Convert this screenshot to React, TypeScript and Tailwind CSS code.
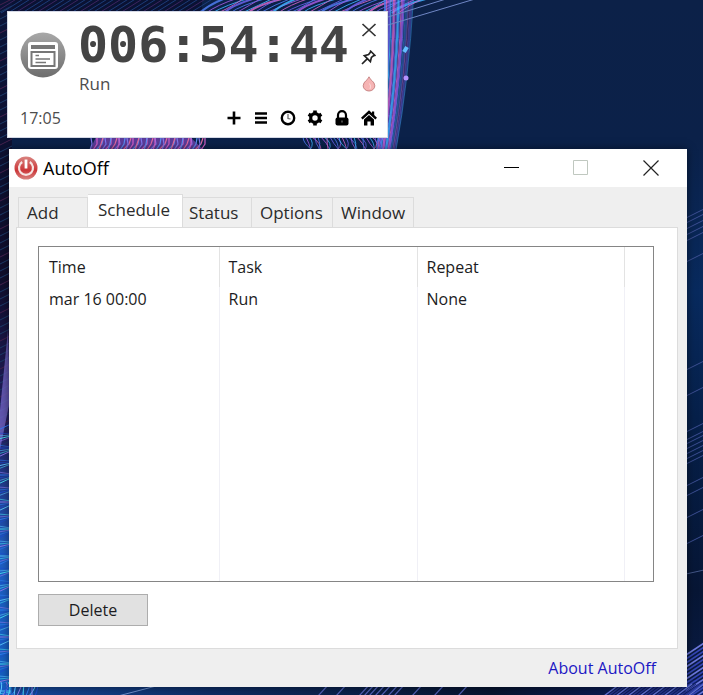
import { useState } from "react";

const tabs = [
  { label: "Add", width: "w-[70px]", inset: "pl-2" },
  { label: "Schedule", width: "w-[95px]", inset: "pl-[10px]" },
  { label: "Status", width: "w-[69px]", inset: "pl-[6px]" },
  { label: "Options", width: "w-[81px]", inset: "pl-2" },
  { label: "Window", width: "w-[81px]", inset: "pl-2" },
];

const tasks = [{ time: "mar 16 00:00", task: "Run", repeat: "None" }];

const range = (n: number) => Array.from({ length: n }, (_, i) => i);

/* ================= DESKTOP WALLPAPER ================= */
const Wallpaper = () => {
  const purples = ["#4f7df0", "#a35be0", "#3fb4ff", "#d267c8", "#6a63ea"];
  const cyans = ["#2f7df5", "#5cc8ff", "#8f7cf0", "#1c4fd0", "#49e0f5"];

  return (
    <svg
      className="absolute inset-0 h-full w-full"
      viewBox="0 0 703 695"
      preserveAspectRatio="none"
      fill="none"
      aria-hidden="true"
    >
      <defs>
        <linearGradient id="sky" x1="0" y1="0" x2="0" y2="1">
          <stop offset="0" stopColor="#0c2148" />
          <stop offset="0.2" stopColor="#0b2149" />
          <stop offset="0.42" stopColor="#082a5e" />
          <stop offset="0.6" stopColor="#06204a" />
          <stop offset="0.85" stopColor="#071635" />
          <stop offset="1" stopColor="#0b1c46" />
        </linearGradient>
        <linearGradient id="floor" x1="0" y1="0" x2="1" y2="0">
          <stop offset="0" stopColor="#164a9c" />
          <stop offset="0.3" stopColor="#0d2c63" />
          <stop offset="0.7" stopColor="#07142f" />
          <stop offset="1" stopColor="#0d1f66" />
        </linearGradient>
        <linearGradient id="edge" x1="0" y1="0" x2="0" y2="1">
          <stop offset="0" stopColor="#0b1438" />
          <stop offset="0.4" stopColor="#100e2c" />
          <stop offset="0.62" stopColor="#232063" />
          <stop offset="0.8" stopColor="#1f5fc4" />
          <stop offset="1" stopColor="#145fc0" />
        </linearGradient>
      </defs>
      <rect width="703" height="695" fill="url(#sky)" />
      <rect y="680" width="703" height="15" fill="url(#floor)" />
      <rect width="12" height="695" fill="url(#edge)" />
      <rect x="12" width="190" height="12" fill="#0a1233" />

      {/* slanted fibres on the upper left */}
      {range(30).map((i) => (
        <path
          key={`t${i}`}
          d={`M${i * 7 - 6} 13l24 -15`}
          stroke={i % 3 ? "#1d3c78" : "#3d2560"}
          strokeWidth="1"
        />
      ))}
      {range(64).map((i) => (
        <path
          key={`l${i}`}
          d={`M-2 ${i * 7 + 6}l14 -7`}
          stroke={i % 4 ? "#1c3b68" : "#44224e"}
          strokeWidth="1"
        />
      ))}
      <path d="M8 330L0 410V450L10 400Z" fill="#7a6cd0" opacity="0.7" />
      {range(90).map((i) => (
        <path
          key={`b${i}`}
          d={`M-2 ${430 + i * 3}l13 ${((i * 7) % 9) - 6}`}
          stroke={cyans[(i * 3) % 5]}
          strokeWidth="1"
          opacity={i % 3 ? 0.6 : 0.9}
        />
      ))}
      {range(14).map((i) => (
        <path
          key={`c${i}`}
          d={`M${i * 3 - 4} 696q${(i % 3) * 4} -9 ${(i % 4) * 2} -14`}
          stroke={cyans[i % 5]}
        />
      ))}

      {/* bundle running behind the timer */}
      {range(34).map((i) => (
        <path
          key={`a${i}`}
          d={`M${200 + i * 6} 13q${8 + (i % 4) * 3} -8 ${26 + (i % 3) * 6} -15`}
          stroke={purples[i % 5]}
          strokeWidth={i % 4 ? 1 : 2}
          opacity="0.85"
        />
      ))}
      {range(20).map((i) => (
        <path
          key={`r${i}`}
          d={`M${385 + i * 1.5} -2Q${386 + i * 1.2} 80 ${377 + i} 150`}
          stroke={purples[(i * 3) % 5]}
          strokeWidth={i % 3 ? 1 : 2}
          opacity={i > 13 ? 0.4 : 0.8}
        />
      ))}
      <path d="M388 17L446 -1M388 25L475 -1" stroke="#6f86c4" strokeWidth="1" />
      <path d="M404 52l3 -5" stroke="#63bdff" strokeWidth="4" />
      <circle cx="406" cy="78" r="2.5" fill="#b493ff" />

      {/* patches in the gap between the windows */}
      <path d="M96 137H190L204 150H90Z" fill="#5b3c9a" />
      {range(38).map((i) => (
        <path
          key={`p${i}`}
          d={`M${90 + i * 3} 150l${(i % 3) * 2 + 2} -6l${(i % 4) - 1} -6`}
          stroke={["#7f78ee", "#d25fc8", "#5b8df0", "#e2689e"][i % 4]}
          strokeWidth="1.2"
        />
      ))}
      {range(27).map((i) => (
        <path
          key={`q${i}`}
          d={`M${303 + i * 3} 137q${(i % 4) * 3} 6 ${9 - (i % 3) * 4} 13`}
          stroke={purples[i % 5]}
          opacity="0.85"
        />
      ))}

      {/* streaks on the right and bottom edges */}
      {[218, 223, 229, 235, 241, 262, 370, 396, 432, 440, 444, 449, 454, 459, 464, 486, 496, 518, 544].map(
        (y) => (
          <path key={y} d={`M686 ${y}l18 -9`} stroke="#3d4f92" strokeWidth="1" />
        ),
      )}
      <path d="M686 574l18 -4" stroke="#435787" />
      {range(13).map((i) => (
        <path
          key={`s${i}`}
          d={`M686 ${655 + i * 4}l18 -12`}
          stroke={i % 3 ? "#3546b4" : "#6c78dc"}
          strokeWidth="1.6"
        />
      ))}
      {range(22).map((i) => (
        <path
          key={`e${i}`}
          d={`M${604 + i * 4} 696l16 -12`}
          stroke={i % 3 ? "#26338c" : "#606fd0"}
          strokeWidth="1.4"
        />
      ))}
      {[318, 336, 359, 364, 369, 375, 381, 388, 394, 412, 434, 458].map((x) => (
        <path key={x} d={`M${x} 696l11 -12`} stroke="#5362b8" strokeWidth="1.2" />
      ))}
      <path d="M118 696L160 685" stroke="#6d8fca" strokeWidth="1" />
    </svg>
  );
};

/* ================= TIMER ICONS ================= */
const CloseIcon = () => (
  <svg width="16" height="16" viewBox="0 0 16 16" stroke="#333" strokeWidth="1.7" fill="none">
    <path d="M1.5 2l13 12M14.5 2L1.5 14" />
  </svg>
);

const PinIcon = () => (
  <svg width="16" height="16" viewBox="0 0 16 16" stroke="#222" strokeWidth="1.7" fill="none">
    <path d="M9 1.5l5.5 5.5M10 2.5L7.6 5.6L3.4 6.6L9.4 12.6L10.4 8.4L13.5 6M6.4 9.6L1 15" />
  </svg>
);

const DropIcon = () => (
  <svg width="16" height="16" viewBox="0 0 16 16">
    <path
      d="M8 .8C8.4 3.6 13.8 5.4 13.8 9.8A5.8 5.2 0 0 1 2.2 9.8C2.2 5.4 7.6 3.6 8 .8Z"
      fill="#f6b4b4"
      stroke="#c98585"
    />
    <path d="M8.5 7.5q2 2.5 .5 5.5" stroke="#fbd9d9" fill="none" />
  </svg>
);

const PlusIcon = () => (
  <svg width="16" height="16" viewBox="0 0 16 16">
    <path d="M8 1.5V14.5M1.5 8H14.5" stroke="#000" strokeWidth="2.6" />
  </svg>
);

const ListIcon = () => (
  <svg width="16" height="16" viewBox="0 0 16 16">
    <path d="M2 3.5H14M2 8H14M2 12.5H14" stroke="#000" strokeWidth="2.6" />
  </svg>
);

const ClockIcon = () => (
  <svg width="16" height="16" viewBox="0 0 16 16" fill="none">
    <circle cx="8" cy="8" r="6.2" stroke="#000" strokeWidth="2.4" />
    <path d="M8 4V8.5L10.5 9" stroke="#666" strokeWidth="1.2" />
  </svg>
);

const GearIcon = () => (
  <svg width="16" height="16" viewBox="0 0 16 16" fill="none" stroke="#000">
    <circle cx="8" cy="8" r="4.3" strokeWidth="3.2" />
    {[0, 60, 120].map((a) => (
      <path
        key={a}
        d="M8 .6V4M8 12V15.4"
        strokeWidth="3.6"
        transform={`rotate(${a} 8 8)`}
      />
    ))}
  </svg>
);

const LockIcon = () => (
  <svg width="16" height="16" viewBox="0 0 16 16" fill="none">
    <path d="M4 8V5.2A3.5 3.5 0 0 1 12 5.2V8" stroke="#000" strokeWidth="2.2" />
    <rect x="1.5" y="7.5" width="13" height="8" rx="2" fill="#000" />
    <path d="M8 10.5V12.5" stroke="#777" strokeWidth="1.2" />
  </svg>
);

const HomeIcon = () => (
  <svg width="16" height="16" viewBox="0 0 16 16" fill="none">
    <path d="M.8 8.6L8 2L15.2 8.6" stroke="#000" strokeWidth="2.4" />
    <path d="M3 9.4L8 5L13 9.4V15.5H9.6V11.5H6.4V15.5H3Z" fill="#000" />
    <path d="M11 1.5H13.2V6L11 4Z" fill="#000" />
  </svg>
);

const TaskIcon = () => (
  <svg width="46" height="46" viewBox="0 0 46 46" aria-hidden="true">
    <defs>
      <linearGradient id="disc" x1="0" y1="0" x2="0" y2="1">
        <stop offset="0" stopColor="#a8a8a8" />
        <stop offset="1" stopColor="#6d6d6d" />
      </linearGradient>
    </defs>
    <circle cx="23" cy="23" r="22.5" fill="url(#disc)" />
    <rect x="8" y="10" width="30" height="27" rx="3" fill="#fff" />
    <rect x="11" y="13" width="24" height="4" fill="#777" />
    <rect x="11.5" y="20" width="23" height="14" fill="none" stroke="#777" strokeWidth="2" />
    <path d="M15.5 23.5H19M15.5 27H30M15.5 30.5H26" stroke="#777" strokeWidth="1.5" />
  </svg>
);

const PowerIcon = () => (
  <svg width="24" height="24" viewBox="0 0 24 24" fill="none" aria-hidden="true">
    <defs>
      <linearGradient id="power" x1="0" y1="0" x2="0" y2="1">
        <stop offset="0" stopColor="#d98480" />
        <stop offset="0.6" stopColor="#cb3638" />
        <stop offset="1" stopColor="#d98480" />
      </linearGradient>
    </defs>
    <circle cx="12" cy="12" r="11.5" fill="url(#power)" />
    <path d="M8.2 6A7 7 0 1 0 15.8 6" stroke="#f6e4e2" strokeWidth="2.2" />
    <path d="M12 3.5V12.5" stroke="#fff" strokeWidth="2.8" />
  </svg>
);

/* ================= TIMER WIDGET ================= */
const sideActions = [
  { label: "Close timer", icon: <CloseIcon /> },
  { label: "Pin", icon: <PinIcon /> },
  { label: "Opacity", icon: <DropIcon /> },
];

const bottomActions = [
  { label: "New task", icon: <PlusIcon /> },
  { label: "Tasks", icon: <ListIcon /> },
  { label: "Clock", icon: <ClockIcon /> },
  { label: "Settings", icon: <GearIcon /> },
  { label: "Lock", icon: <LockIcon /> },
  { label: "Home", icon: <HomeIcon /> },
];

const TimerWidget = () => (
  <section className="w-[381px] max-w-full border border-[#d5d9e6] bg-white pt-1 pr-[10px] pb-[7px] pl-3 text-[#4d4d4d]">
    <div className="flex">
      <div className="pt-4">
        <TaskIcon />
      </div>
      <div className="flex-1 pl-3">
        <p className="font-['DejaVu_Sans_Mono',monospace] text-[50px] leading-[58px] font-bold text-[#444]">
          006:54:44
        </p>
        <p className="pl-[1px] text-[17px] leading-[20px]">Run</p>
      </div>
      <div className="flex flex-col gap-[11px] pt-[6px]">
        {sideActions.map((a) => (
          <button key={a.label} aria-label={a.label} className="block">
            {a.icon}
          </button>
        ))}
      </div>
    </div>
    <div className="flex items-center justify-between pt-3">
      <span className="text-[16px] leading-[24px]">17:05</span>
      <div className="flex gap-[11px]">
        {bottomActions.map((a) => (
          <button key={a.label} aria-label={a.label} className="block">
            {a.icon}
          </button>
        ))}
      </div>
    </div>
  </section>
);

/* ================= AUTOOFF WINDOW ================= */
const TitleBar = () => (
  <header className="flex h-[38px] shrink-0 items-center bg-white pr-7 pl-[5px] text-black">
    <PowerIcon />
    <h1 className="flex-1 pl-[5px] text-[18px] leading-[24px]">AutoOff</h1>
    <div className="flex gap-[54px]">
      <button aria-label="Minimize">
        <svg width="16" height="16" viewBox="0 0 16 16" stroke="#000">
          <path d="M1 7.5H16" />
        </svg>
      </button>
      <button aria-label="Maximize" disabled>
        <svg width="16" height="16" viewBox="0 0 16 16" fill="none" stroke="#c0c8c0">
          <path d="M.5 .5H14.5V14.5H.5Z" />
        </svg>
      </button>
      <button aria-label="Close">
        <svg width="16" height="16" viewBox="0 0 16 16" stroke="#222" strokeWidth="1.2">
          <path d="M.5 .5L15.5 15.5M15.5 .5L.5 15.5" />
        </svg>
      </button>
    </div>
  </header>
);

const TaskList = () => (
  <div className="flex-1 border border-[#858585] bg-white">
    <table className="h-full w-full table-fixed border-collapse text-left text-[16px] leading-[22px] text-[#1c1c22]">
      <colgroup>
        <col className="w-[180px]" />
        <col className="w-[198px]" />
        <col className="w-[207px]" />
        <col />
      </colgroup>
      <thead>
        <tr className="h-[40px]">
          <th className="border-r border-[#e3e3e3] pl-[10px] font-normal">Time</th>
          <th className="border-r border-[#e3e3e3] pl-[9px] font-normal">Task</th>
          <th className="border-r border-[#e3e3e3] pl-[9px] font-normal">Repeat</th>
          <td />
        </tr>
      </thead>
      <tbody>
        {tasks.map((t) => (
          <tr key={t.time} className="h-[24px]">
            <td className="border-r border-[#f0f0f6] pl-[10px]">{t.time}</td>
            <td className="border-r border-[#f0f0f6] pl-[9px]">{t.task}</td>
            <td className="border-r border-[#f0f0f6] pl-[9px]">{t.repeat}</td>
            <td />
          </tr>
        ))}
        <tr aria-hidden="true">
          <td className="border-r border-[#f0f0f6]" />
          <td className="border-r border-[#f0f0f6]" />
          <td className="border-r border-[#f0f0f6]" />
          <td />
        </tr>
      </tbody>
    </table>
  </div>
);

const AutoOffWindow = () => {
  const [active, setActive] = useState("Schedule");

  return (
    <main className="mr-4 ml-[2px] flex flex-1 flex-col bg-[#efefef] shadow-[0_0_8px_rgba(0,0,0,0.5)]">
      <TitleBar />

      {/* tabs */}
      <div role="tablist" className="-mb-[1px] flex items-end pt-[7px] pl-[9px]">
        {tabs.map((tab) => {
          const on = tab.label === active;
          return (
            <button
              key={tab.label}
              role="tab"
              aria-selected={on}
              onClick={() => setActive(tab.label)}
              className={`${tab.width} ${tab.inset} border-t border-r text-left text-[17px] leading-[24px] whitespace-nowrap text-[#2b2b2b] first:border-l ${
                on
                  ? "h-[34px] border-[#dcdcdc] border-b border-b-white bg-white pb-[2px]"
                  : "h-[31px] border-[#dcdcdc] border-b bg-[#efefef]"
              }`}
            >
              {tab.label}
            </button>
          );
        })}
      </div>

      <div className="mr-[9px] ml-[7px] flex flex-1 flex-col border border-[#dcdcdc] bg-white pt-[18px] pr-[23px] pb-[22px] pl-[21px]">
        <TaskList />
        <button className="mt-3 h-8 w-[110px] border border-[#adadad] bg-[#e1e1e1] text-[16px] leading-[22px] text-[#1c1c22]">
          Delete
        </button>
      </div>

      <footer className="flex h-[38px] shrink-0 items-center justify-end pr-[31px]">
        <a href="#about" className="text-[16px] leading-[22px] text-[#1c17c4]">
          About AutoOff
        </a>
      </footer>
    </main>
  );
};

export default function App() {
  return (
    <div className="relative h-screen min-h-[560px] overflow-hidden bg-[#0c2148] font-['Open_Sans',sans-serif]">
      <Wallpaper />
      <div className="relative flex h-full flex-col gap-[11px] pt-[11px] pb-2 pl-[7px]">
        <TimerWidget />
        <AutoOffWindow />
      </div>
    </div>
  );
}
